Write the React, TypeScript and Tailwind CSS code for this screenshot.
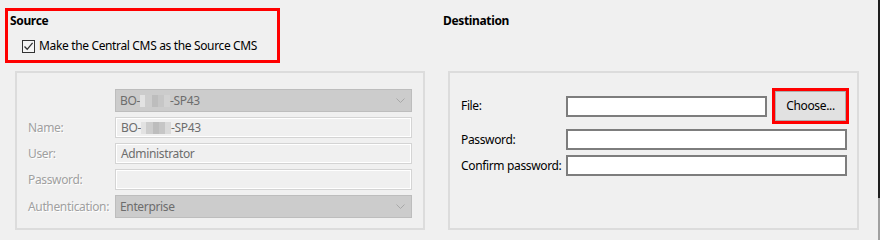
import React from "react";

// blurred host name part, like the pixelated patch in the screenshot
const Blur = ({ tall = false }: { tall?: boolean }) => (
  <span className="inline-flex h-[12px] w-[30px] items-stretch align-middle">
    <span className="w-[5px] bg-[#e2e2e2]" />
    <span className="w-[7px] bg-[#cdcdcd]" />
    <span className="w-[6px] bg-[#bdbdbd]" />
    <span className="w-[6px] bg-[#c6c6c6]" />
    <span className={tall ? "w-[6px] bg-[#dadada]" : "w-[6px] bg-[#d2d2d2]"} />
  </span>
);

const Chevron = () => (
  <svg width="9" height="6" viewBox="0 0 9 6" className="mr-[6px]">
    <path d="M0.5 0.5 L4.5 4.5 L8.5 0.5" fill="none" stroke="#a8a8a8" strokeWidth="1" />
  </svg>
);

const DisabledCombo = ({ children }: { children: React.ReactNode }) => (
  <div className="flex h-[23px] items-center justify-between border border-[#bdbdbd] bg-[#cccccc] pl-[4px] text-[#6d6d6d]">
    <span className="flex items-center">{children}</span>
    <Chevron />
  </div>
);

const DisabledInput = ({ value }: { value?: React.ReactNode }) => (
  <div className="flex h-[21px] items-center border border-[#d4d4d4] bg-[#f0f0f0] pl-[5px] text-[#6d6d6d] shadow-[inset_0_0_0_1px_#ffffff]">
    {value}
  </div>
);

const Label = ({ text }: { text: string }) => (
  <div className="flex items-center whitespace-nowrap text-[#a0a0a0] [text-shadow:1px_1px_0_#ffffff]">{text}</div>
);

const TextBox = ({ w }: { w: string }) => (
  <div className={`h-[21px] ${w} border-2 border-[#7d7d7d] bg-white`} />
);

export default function App() {
  return (
    <div className="flex h-[240px] w-[880px] overflow-hidden bg-[#f0f0f0] font-['Noto_Sans',sans-serif] text-[12px] leading-[16px] tracking-[-0.35px] text-black">
      <div className="flex flex-1 pt-[8px]">
        {/* Source */}
        <div className="w-[438px] pl-[5px]">
          <div className="h-[55px] w-[275px] border-[3px] border-[#ff0000] pl-[2px] pt-[2px]">
            <div className="font-bold">Source</div>
            <label className="ml-[12px] mt-[9px] flex items-center gap-[4px]">
              <span className="flex h-[13px] w-[13px] items-center justify-center border border-[#333333] bg-[#f5f5f5]">
                <svg width="11" height="11" viewBox="0 0 11 11">
                  <path d="M1.5 5.5 L4.2 8.3 L9.6 1.8" fill="none" stroke="#333333" strokeWidth="1.3" />
                </svg>
              </span>
              <span>Make the Central CMS as the Source CMS</span>
            </label>
          </div>

          <div className="ml-[10px] mt-[8px] h-[159px] w-[410px] border-2 border-[#dcdcdc] pl-[11px] pt-[16px]">
            <div className="grid grid-cols-[87px_297px] gap-y-[5px]">
              <div />
              <DisabledCombo>
                BO-<Blur />-SP43
              </DisabledCombo>
              <Label text="Name:" />
              <DisabledInput
                value={
                  <span className="flex items-center">
                    BO-<Blur tall />-SP43
                  </span>
                }
              />
              <Label text="User:" />
              <DisabledInput value="Administrator" />
              <Label text="Password:" />
              <DisabledInput />
              <Label text="Authentication:" />
              <DisabledCombo>Enterprise</DisabledCombo>
            </div>
          </div>
        </div>

        {/* Destination */}
        <div className="pl-[5px]">
          <div className="h-[55px] pt-[5px] font-bold">Destination</div>
          <div className="ml-[5px] mt-[8px] h-[159px] w-[411px] border-2 border-[#dcdcdc] pl-[11px] pt-[15px]">
            <div className="flex h-[36px] items-center">
              <div className="w-[105px] whitespace-nowrap">File:</div>
              <TextBox w="w-[201px]" />
              <div className="ml-[5px] h-[36px] w-[77px] border-[3px] border-[#ff0000]">
                <button className="flex h-full w-full items-center justify-center border border-[#adadad] bg-[#e1e1e1] text-black">
                  Choose...
                </button>
              </div>
            </div>
            <div className="mt-[5px] flex items-center">
              <div className="w-[105px] whitespace-nowrap">Password:</div>
              <TextBox w="w-[281px]" />
            </div>
            <div className="mt-[5px] flex items-center">
              <div className="w-[105px] whitespace-nowrap">Confirm password:</div>
              <TextBox w="w-[281px]" />
            </div>
          </div>
        </div>
      </div>

      {/* window edge */}
      <div className="flex w-[2px] flex-col">
        <div className="h-[198px] bg-[#1e1e1e]" />
        <div className="flex-1 bg-[#a0a0a0]" />
      </div>
    </div>
  );
}
